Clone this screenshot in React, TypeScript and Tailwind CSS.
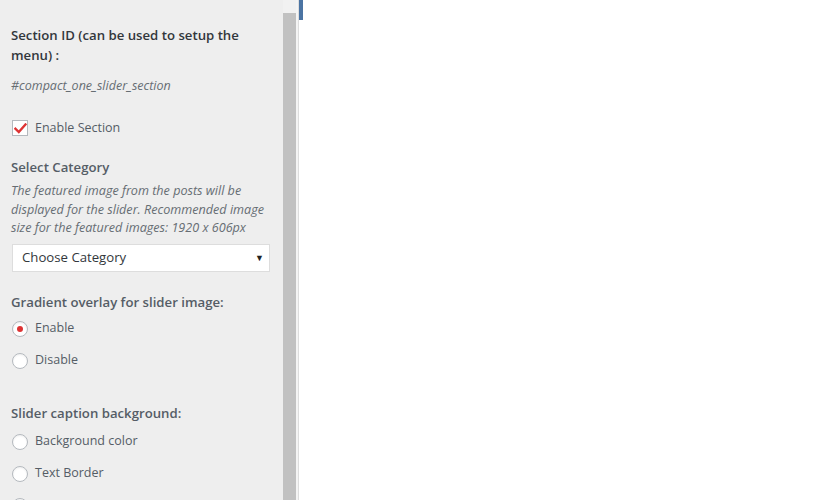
import React from 'react';

const font = { fontFamily: '"Open Sans", "Liberation Sans", sans-serif' };

const Radio: React.FC<{ checked?: boolean; label?: string }> = ({ checked, label }) => (
  <label className="flex items-center h-[20px] text-[12.5px] text-[#555d66]">
    <span className="w-[16px] h-[16px] rounded-full border border-[#b4b9be] bg-white flex items-center justify-center shadow-[inset_0_1px_2px_rgba(0,0,0,0.07)]">
      {checked && <span className="w-[6px] h-[6px] rounded-full bg-[#dd3333]" />}
    </span>
    {label && <span className="ml-[7px]">{label}</span>}
  </label>
);

export default function App() {
  return (
    <div className="flex h-[500px] w-[819px] overflow-hidden bg-white" style={font}>
      {/* Customizer panel */}
      <aside className="w-[283px] flex-shrink-0 bg-[#eeeeee] pl-[11px] pr-[13px]">
        <h3 className="mt-[25px] text-[13.2px] leading-[20px] font-semibold text-[#32373c]">
          Section ID (can be used to setup the menu) :
        </h3>
        <p className="mt-[11px] text-[12.5px] leading-[20px] italic text-[#666d73]">
          #compact_one_slider_section
        </p>

        <label className="mt-[22px] flex items-center h-[20px] text-[12.5px] text-[#555d66]">
          <span className="w-[16px] h-[16px] ml-[1px] border border-[#b4b9be] bg-white flex items-center justify-center">
            <svg width="13" height="11" viewBox="0 0 13 11">
              <path d="M1.5 5.8 L4.8 9 L11.5 1.5" fill="none" stroke="#dd3333" strokeWidth="2.4" strokeLinecap="square" />
            </svg>
          </span>
          <span className="ml-[7px]">Enable Section</span>
        </label>

        <h4 className="mt-[19px] text-[13.2px] leading-[20px] font-semibold text-[#555d66]">Select Category</h4>
        <p className="mt-[5px] text-[12.6px] leading-[18.5px] italic text-[#666d73]">
          The featured image from the posts will be displayed for the slider. Recommended image size for the featured images: 1920 x 606px
        </p>
        <div className="mt-[6px] ml-[1px] h-[28px] border border-[#dddddd] bg-white flex items-center justify-between pl-[9px] pr-[5px] text-[13.2px] text-[#32373c]">
          <span>Choose Category</span>
          <span className="text-[9px] text-[#222]">▼</span>
        </div>

        <h4 className="mt-[20px] text-[13.2px] leading-[20px] font-semibold text-[#555d66]">
          Gradient overlay for slider image:
        </h4>
        <div className="mt-[7px] ml-[1px] flex flex-col gap-[12px]">
          <Radio checked label="Enable" />
          <Radio label="Disable" />
        </div>

        <h4 className="mt-[32px] text-[13.2px] leading-[20px] font-semibold text-[#555d66]">
          Slider caption background:
        </h4>
        <div className="mt-[9px] ml-[1px] flex flex-col gap-[12px]">
          <Radio label="Background color" />
          <Radio label="Text Border" />
          <Radio />
        </div>
      </aside>

      {/* Scrollbar */}
      <div className="w-[13px] flex-shrink-0 bg-[#f1f1f1] flex flex-col">
        <div className="mt-[13px] flex-1 bg-[#c1c1c1]" />
      </div>
      <div className="w-[3px] flex-shrink-0 bg-[#f4f4f4] border-r border-[#dddddd]" />

      {/* Preview */}
      <main className="flex-1 bg-white">
        <div className="w-[4px] h-[20px] bg-[#4b74a3]" />
      </main>
    </div>
  );
}
